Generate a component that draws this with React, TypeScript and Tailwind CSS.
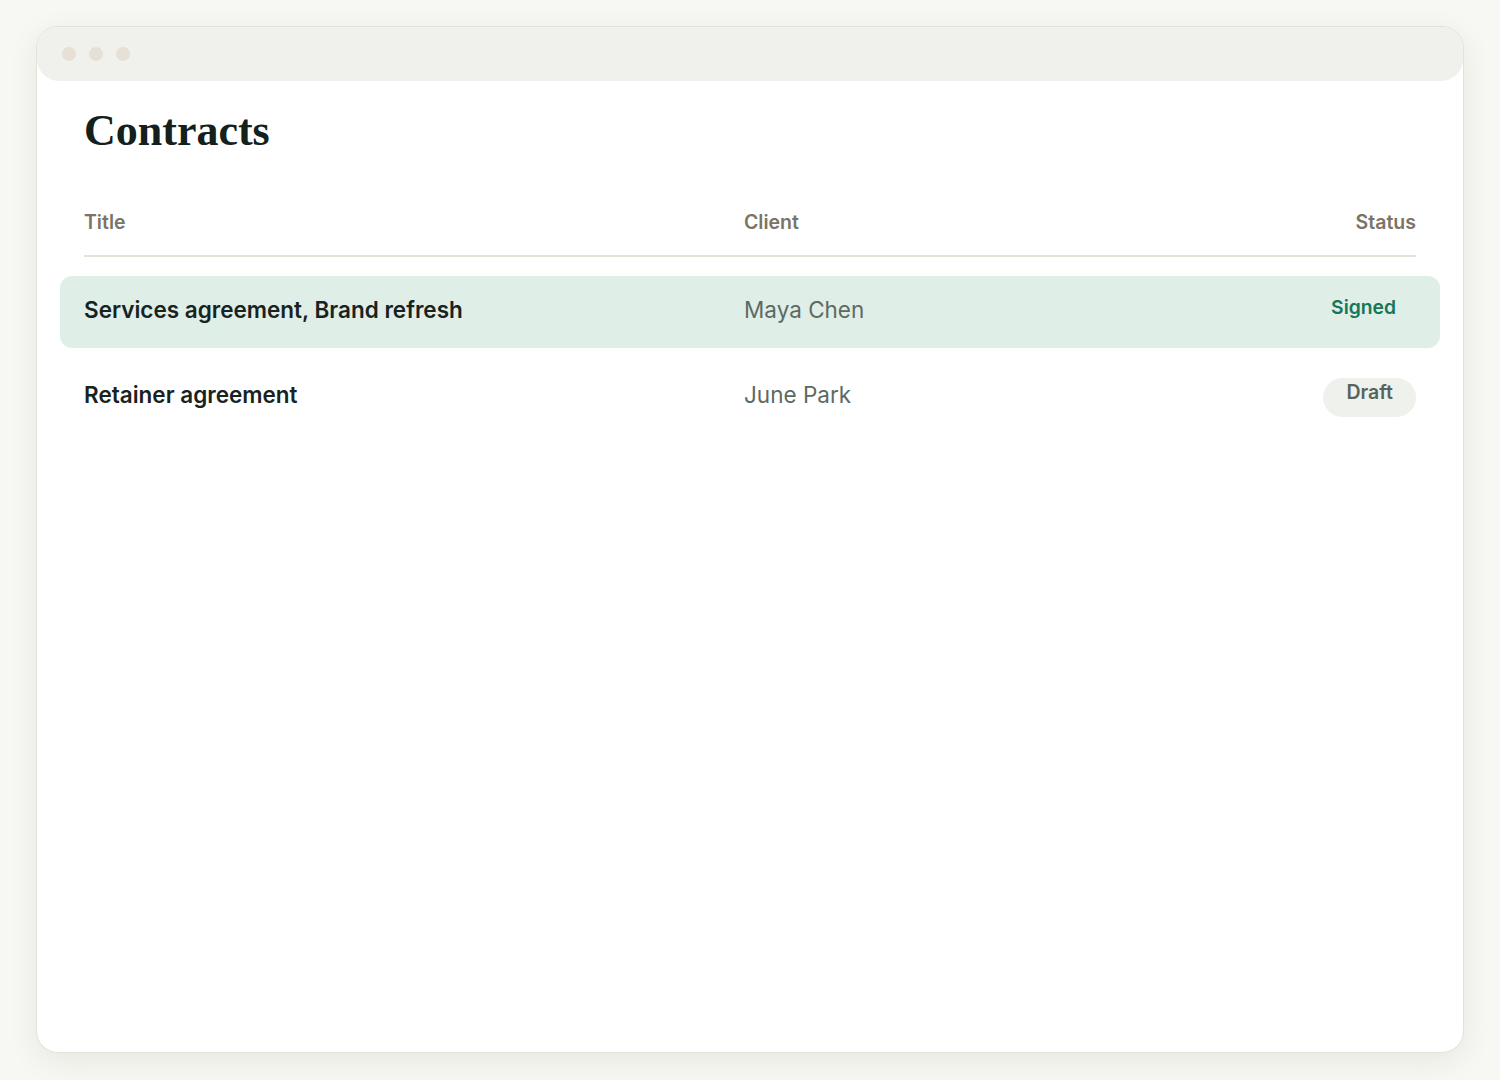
import React from 'react';

const ROWS = [
  { title: 'Services agreement, Brand refresh', client: 'Maya Chen', status: 'Signed', active: true },
  { title: 'Retainer agreement', client: 'June Park', status: 'Draft', active: false },
];

function StatusPill({ status }: { status: string }) {
  if (status === 'Signed') {
    return (
      <span className="inline-flex h-[39px] items-center px-5 pb-[9px] text-[19.3px] font-semibold text-[#17765a]">
        {status}
      </span>
    );
  }
  return (
    <span className="inline-flex h-[39px] items-center rounded-full bg-[#eff1ec] px-[23px] pb-[9px] text-[19.5px] font-semibold text-[#56645e]">
      {status}
    </span>
  );
}

export default function App() {
  return (
    <div className="flex h-[1080px] flex-col bg-[#f7f7f3] px-9 pt-[26px] pb-[27px] font-['Inter',sans-serif]">
      <div className="flex flex-1 flex-col overflow-hidden rounded-[22px] border border-[#e4e1d8] bg-white shadow-[0_8px_30px_rgba(60,60,40,0.08)]">
        {/* window chrome */}
        <div className="flex h-[54px] shrink-0 items-center gap-[13px] rounded-b-[22px] bg-[#f0f1ec] pl-[25px]">
          <span className="h-[14px] w-[14px] rounded-full bg-[#e6e0d6]" />
          <span className="h-[14px] w-[14px] rounded-full bg-[#e6e0d6]" />
          <span className="h-[14px] w-[14px] rounded-full bg-[#e6e0d6]" />
        </div>

        <div className="px-[47px] pt-[22px]">
          <h1 className="font-['Liberation_Serif',serif] text-[44px] font-bold leading-[56px] text-[#14201b]">
            Contracts
          </h1>

          <div className="mt-[50px] grid grid-cols-[660px_1fr_auto] border-b-2 border-[#e6e2d9] pb-[20px] text-[19.5px] font-semibold leading-[26px] text-[#7b7466]">
            <div>Title</div>
            <div>Client</div>
            <div>Status</div>
          </div>

          <div className="mt-[19px] flex flex-col gap-[13px]">
            {ROWS.map((r) => (
              <div
                key={r.title}
                className={`-mx-6 grid h-[72px] grid-cols-[660px_1fr_auto] items-center rounded-[12px] px-6 ${
                  r.active ? 'bg-[#e0eee8]' : ''
                }`}
              >
                <div className="pb-[5px] text-[22.5px] font-semibold text-[#18231f]">{r.title}</div>
                <div className="pb-[5px] text-[22.5px] text-[#5c6a64]">{r.client}</div>
                <div className="flex justify-end">
                  <StatusPill status={r.status} />
                </div>
              </div>
            ))}
          </div>
        </div>
      </div>
    </div>
  );
}
